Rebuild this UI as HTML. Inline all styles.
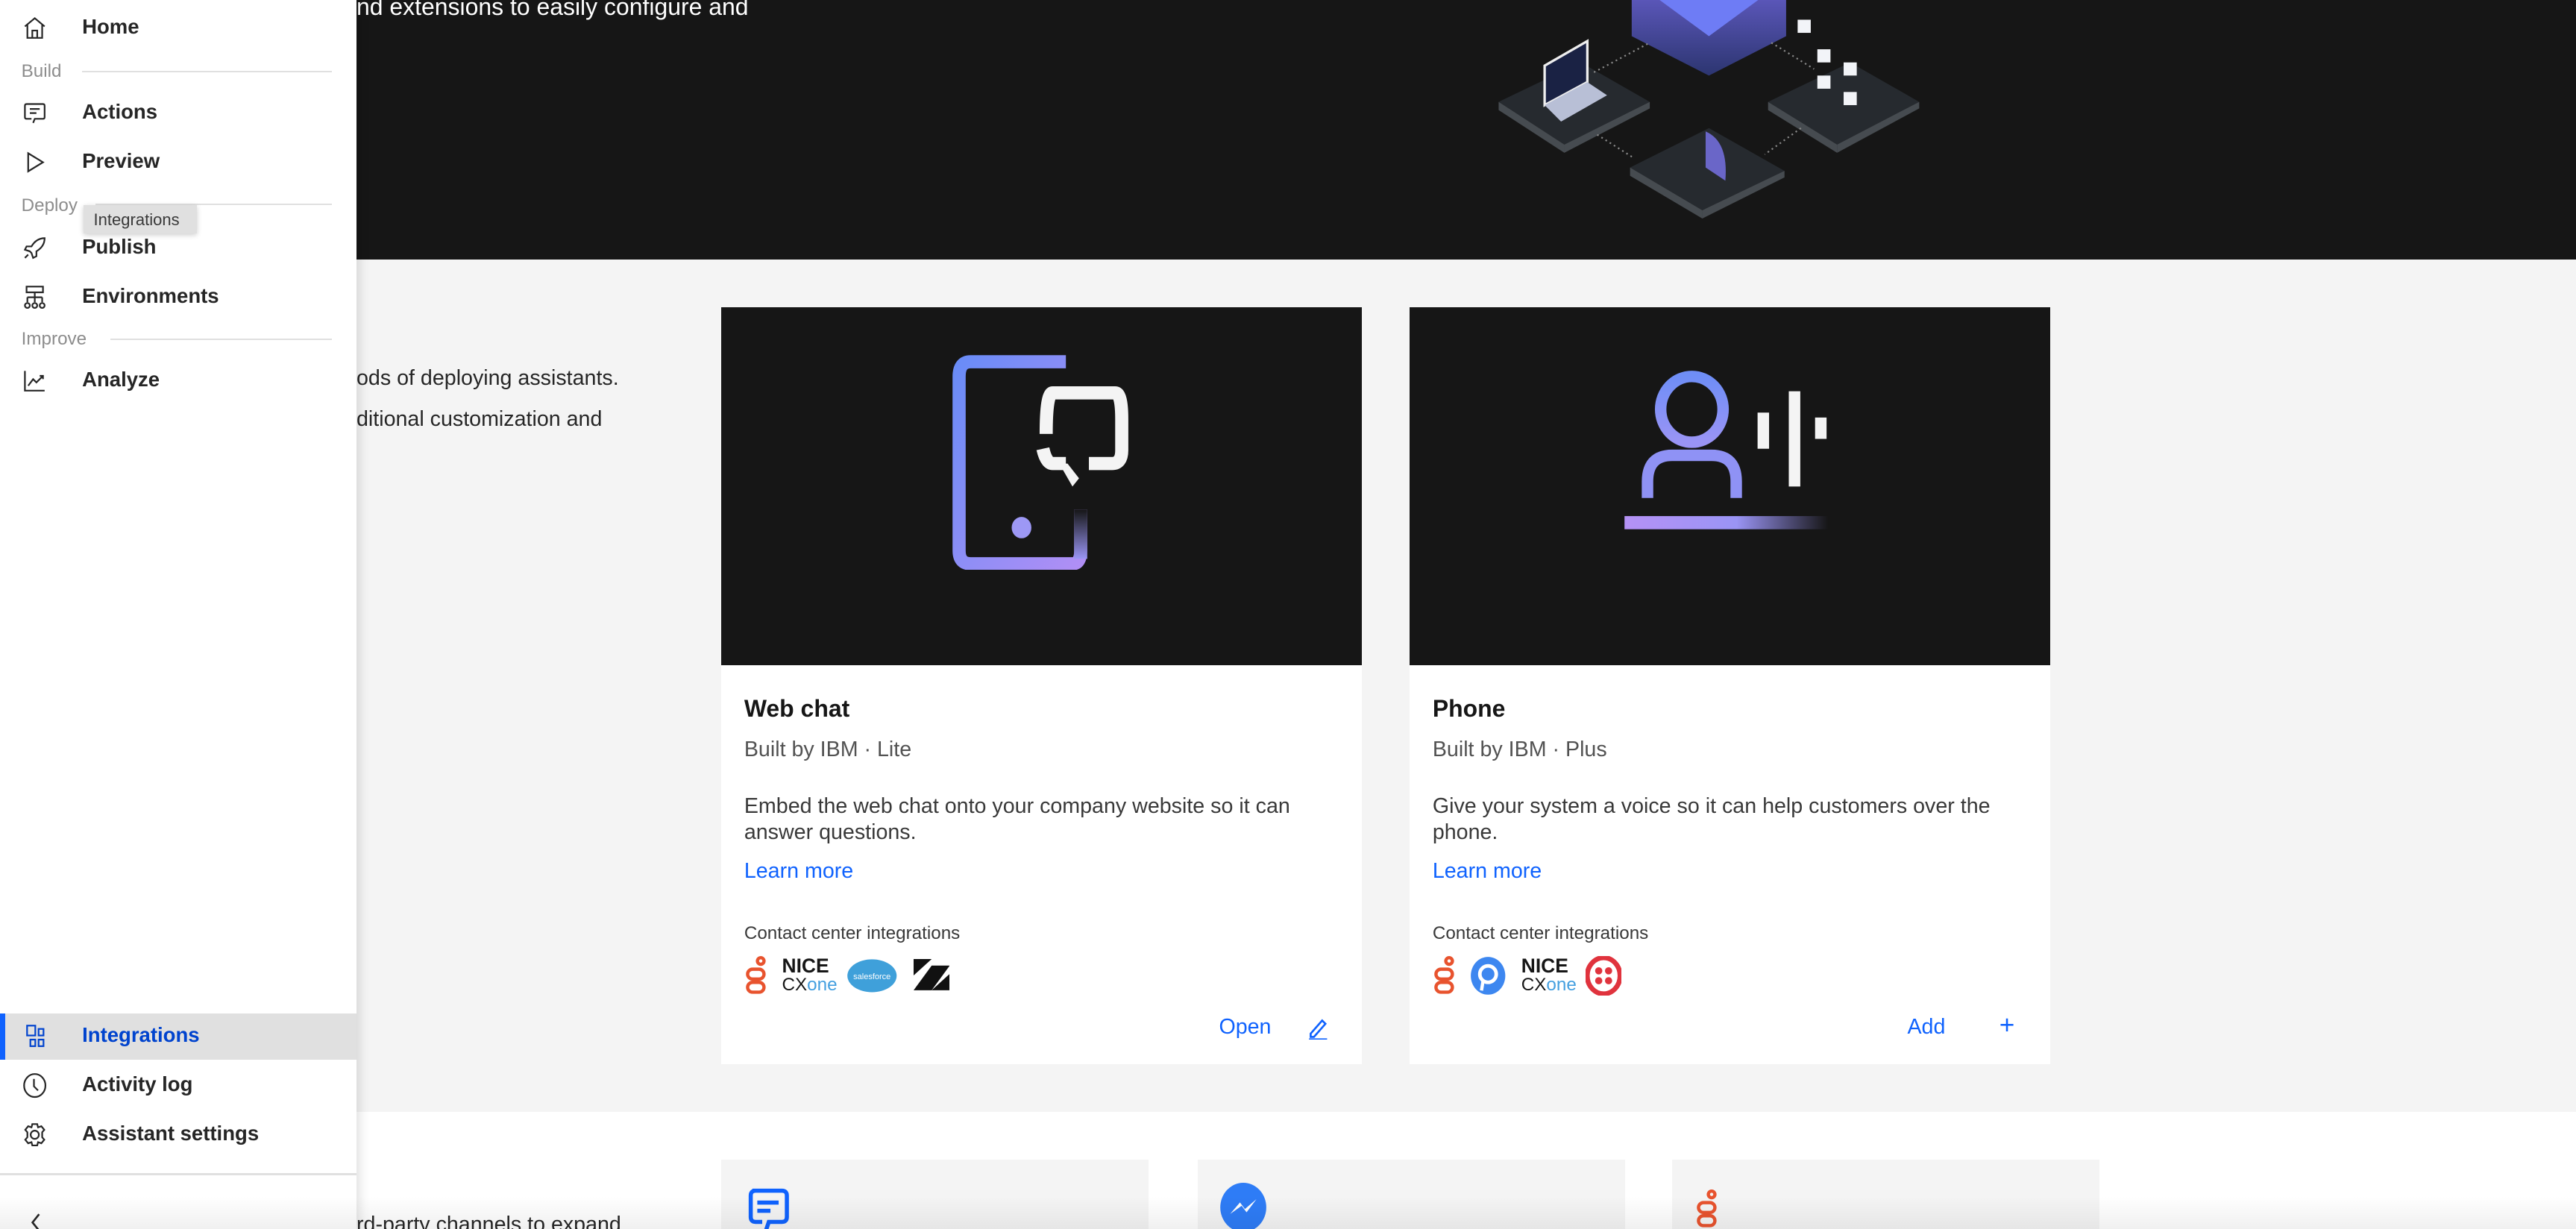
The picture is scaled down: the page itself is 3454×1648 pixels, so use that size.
<!DOCTYPE html>
<html><head><meta charset="utf-8">
<style>
*{margin:0;padding:0;box-sizing:border-box}
html,body{width:3454px;height:1648px;overflow:hidden;background:#fff}
#root{zoom:2.2028;width:1568px;height:748px;position:relative;overflow:hidden;font-family:"Liberation Sans",sans-serif;color:#161616}
.abs{position:absolute}
.hero{left:0;top:0;width:1568px;height:158px;background:#161616}
.gray{left:0;top:158px;width:1568px;height:519px;background:#f4f4f4}
.card{position:absolute;top:187px;width:390px;height:461px;background:#fff}
.card .img{height:218px;background:#161616;position:relative}
.card h3{position:absolute;left:14px;top:236px;font-size:14.5px;font-weight:bold}
.card .sub{position:absolute;left:14px;top:262px;font-size:13px;color:#525252}
.card .desc{position:absolute;left:14px;top:296px;width:350px;font-size:13px;line-height:16px;color:#393939}
.card .lm{position:absolute;left:14px;top:336px;font-size:13px;color:#0f62fe}
.card .cc{position:absolute;left:14px;top:375px;font-size:11px;color:#393939}
.card .logos{position:absolute;left:14px;top:394px;height:26px;display:flex;gap:9px;align-items:center}
.card .act{position:absolute;top:431px;font-size:13px;color:#0f62fe}
.side{left:0;top:0;width:217px;height:748px;background:#fff;box-shadow:2px 0 6px rgba(0,0,0,.12);z-index:5}
.it{position:absolute;left:0;width:217px;height:28px;font-size:12.5px;font-weight:bold;color:#262626}
.it span{position:absolute;left:50px;top:6px}
.it svg{position:absolute;left:13px;top:6px}
.lab{position:absolute;left:13px;font-size:11px;color:#8d8d8d}
.ln{position:absolute;height:1px;background:#e0e0e0;right:15px}
.sc{position:absolute;top:706px;width:260px;height:60px;background:#f4f4f4}
</style></head><body><div id="root">
<div class="abs hero"></div>
<div class="abs" style="left:217px;top:-4px;color:#fff;font-size:14.5px">nd extensions to easily configure and</div>
<svg class="abs" style="left:900px;top:0" width="290" height="150" viewBox="0 0 290 150">
<defs><linearGradient id="cb" x1="0" y1="0" x2="0" y2="1"><stop offset="0" stop-color="#5a56b8"/><stop offset="1" stop-color="#2c3570"/></linearGradient></defs>
<polygon points="93,0 187,0 187,22 140,46 93,22" fill="url(#cb)"/>
<polygon points="110,0 170,0 140,22" fill="#6e7cf5"/>
<g fill="#262a2f"><polygon points="12,62 62,38 104,62 52,88"/><polygon points="176,62 226,38 268,62 218,88"/><polygon points="92,102 140,78 186,104 136,128"/></g>
<g fill="#464b50"><polygon points="12,62 52,88 52,93 12,67"/><polygon points="52,88 104,62 104,66 52,93"/><polygon points="176,62 218,88 218,93 176,67"/><polygon points="218,88 268,62 268,66 218,93"/><polygon points="92,102 136,128 136,133 92,107"/><polygon points="136,128 186,104 186,108 136,133"/></g>
<polygon points="40,40 66,25 66,50 40,64" fill="#1a2244" stroke="#eee" stroke-width="1.5"/>
<polygon points="40,64 66,50 78,58 50,74" fill="#b8bfd6"/>
<path d="M138,80 q14,6 12,30 l-12,-8 z" fill="#6a66c8"/>
<g fill="#f2f4f8"><rect x="194" y="12" width="8" height="8"/><rect x="206" y="30" width="8" height="8"/><rect x="206" y="46" width="8" height="8"/><rect x="222" y="38" width="8" height="8"/><rect x="222" y="56" width="8" height="8"/></g>
<g stroke="#888" stroke-dasharray="1 2" stroke-width="1"><line x1="70" y1="44" x2="104" y2="26"/><line x1="178" y1="26" x2="204" y2="42"/><line x1="72" y1="82" x2="94" y2="96"/><line x1="196" y1="78" x2="174" y2="94"/></g>
</svg>
<div class="abs gray"></div>
<div class="abs" style="left:217px;top:218px;font-size:13px;color:#262626;line-height:25px">ods of deploying assistants.<br>ditional customization and</div>

<div class="card" style="left:439px">
<div class="img"><svg class="abs" style="left:140px;top:28px" width="112" height="132" viewBox="0 0 112 132">
<defs><linearGradient id="g1" x1="0" y1="0" x2="1" y2="1"><stop offset="0" stop-color="#6a8cf7"/><stop offset="1" stop-color="#b08ff5"/></linearGradient><linearGradient id="g2" x1="0" y1="0" x2="0" y2="1"><stop offset="0" stop-color="#161616"/><stop offset="1" stop-color="#9a95f5"/></linearGradient></defs>
<path d="M70,5 H12 Q5,5 5,14 V120 Q5,128 12,128 H74 Q79,128 79,120 V95" fill="none" stroke="url(#g1)" stroke-width="8"/>
<rect x="75" y="95" width="8" height="30" fill="url(#g2)"/>
<ellipse cx="43" cy="106" rx="6" ry="6.5" fill="#9d98f5"/>
<path d="M58,49 Q58,24 62,24 H100 Q104,24 104,40 V59 Q104,67 98,67 H84 M70,67 H62 Q58,67 56,58" fill="none" stroke="#f4f4f4" stroke-width="8"/>
<polygon points="66,67 71,67 78,76 74,81" fill="#f4f4f4"/>
</svg></div>
<h3>Web chat</h3><div class="sub">Built by IBM · Lite</div>
<div class="desc">Embed the web chat onto your company website so it can answer questions.</div>
<div class="lm">Learn more</div><div class="cc">Contact center integrations</div>
<div class="logos">
<svg width="14" height="24" viewBox="0 0 14 24"><g fill="none" stroke="#e8532e" stroke-width="2"><circle cx="10" cy="3" r="2"/><rect x="2" y="8" width="10" height="6" rx="3"/><rect x="2" y="16" width="10" height="6" rx="3"/></g></svg>
<div style="font-size:12px;font-weight:bold;line-height:11px;width:30px">NICE<br><span style="font-weight:normal;font-size:11px">CX<span style="color:#45a0e0">one</span></span></div>
<svg width="32" height="24" viewBox="0 0 32 24"><ellipse cx="16" cy="12" rx="15" ry="10" fill="#3fa0da"/><text x="16" y="14" font-size="5" fill="#fff" text-anchor="middle" font-family="Liberation Sans">salesforce</text></svg>
<svg width="22" height="20" viewBox="0 0 22 20"><polygon points="0,0 11,0 0,10" fill="#111"/><polygon points="11,4 22,4 11,19 0,19" fill="#111"/><polygon points="22,9 22,19 11,19" fill="#111"/></svg>
</div>
<div class="act" style="left:303px">Open</div>
<svg class="abs" style="left:357px;top:432px" width="13" height="14" viewBox="0 0 13 14"><path d="M2,10 L9,2 L11,4 L4,12 L2,12 Z M1,13.5 H12" fill="none" stroke="#0f62fe" stroke-width="1.2"/></svg>
</div>

<div class="card" style="left:858px">
<div class="img"><svg class="abs" style="left:130px;top:38px" width="130" height="114" viewBox="0 0 130 114">
<defs><linearGradient id="g3" x1="0" y1="0" x2="0" y2="1"><stop offset="0" stop-color="#6f8ef6"/><stop offset="1" stop-color="#9a94f5"/></linearGradient><linearGradient id="g4" x1="0" y1="0" x2="1" y2="0"><stop offset="0" stop-color="#b592f5"/><stop offset=".55" stop-color="#9a94f5"/><stop offset="1" stop-color="#161616"/></linearGradient></defs>
<ellipse cx="42" cy="24" rx="19" ry="20" fill="none" stroke="url(#g3)" stroke-width="7"/>
<path d="M15,78 V68 Q15,52 30,52 H54 Q69,52 69,68 V78" fill="none" stroke="#8f92f5" stroke-width="7"/>
<rect x="1" y="89" width="124" height="8" fill="url(#g4)"/>
<rect x="82" y="26" width="7" height="22" fill="#f4f4f4"/><rect x="101" y="13" width="7" height="58" fill="#f4f4f4"/><rect x="117" y="29" width="7" height="13" fill="#f4f4f4"/>
</svg></div>
<h3>Phone</h3><div class="sub">Built by IBM · Plus</div>
<div class="desc">Give your system a voice so it can help customers over the phone.</div>
<div class="lm">Learn more</div><div class="cc">Contact center integrations</div>
<div class="logos">
<svg width="14" height="24" viewBox="0 0 14 24"><g fill="none" stroke="#e8532e" stroke-width="2"><circle cx="10" cy="3" r="2"/><rect x="2" y="8" width="10" height="6" rx="3"/><rect x="2" y="16" width="10" height="6" rx="3"/></g></svg>
<svg width="22" height="24" viewBox="0 0 22 24"><ellipse cx="11" cy="12" rx="10.5" ry="11.5" fill="#3d87f0"/><circle cx="11" cy="11" r="5" fill="none" stroke="#fff" stroke-width="2.2"/><path d="M8,15 L7,21" stroke="#fff" stroke-width="2"/></svg>
<div style="font-size:12px;font-weight:bold;line-height:11px;width:30px">NICE<br><span style="font-weight:normal;font-size:11px">CX<span style="color:#45a0e0">one</span></span></div>
<svg width="22" height="24" viewBox="0 0 22 24"><ellipse cx="11" cy="12" rx="10" ry="11" fill="none" stroke="#e0333d" stroke-width="3"/><g fill="#e0333d"><circle cx="8" cy="9" r="2.2"/><circle cx="14" cy="9" r="2.2"/><circle cx="8" cy="15" r="2.2"/><circle cx="14" cy="15" r="2.2"/></g></svg>
</div>
<div class="act" style="left:303px">Add</div>
<div class="act" style="left:359px;top:428px;font-size:16px">+</div>
</div>

<div class="abs" style="left:217px;top:738px;font-size:13px;color:#262626">rd-party channels to expand</div>
<div class="sc" style="left:439px"><svg class="abs" style="left:15px;top:16px" width="28" height="30" viewBox="0 0 28 30"><path d="M4,3 H22 Q25,3 25,6 V19 Q25,22 22,22 H14 L12,28 M10,22 H6 Q3,22 3,19 V6 Q3,3 6,3" fill="none" stroke="#0f62fe" stroke-width="2.5"/><rect x="7" y="9" width="13" height="2.5" fill="#0f62fe"/><rect x="7" y="14" width="8" height="2.5" fill="#0f62fe"/></svg></div>
<div class="sc" style="left:729px"><svg class="abs" style="left:13px;top:14px" width="30" height="34" viewBox="0 0 30 34"><ellipse cx="15" cy="15" rx="14" ry="15" fill="#2e7cf6"/><path d="M7,19 L13,12 L16,16 L23,10 L17,18 L14,14 Z" fill="#fff"/></svg></div>
<div class="sc" style="left:1018px"><svg class="abs" style="left:14px;top:18px" width="14" height="24" viewBox="0 0 14 24"><g fill="none" stroke="#e8532e" stroke-width="2"><circle cx="10" cy="3" r="2"/><rect x="2" y="8" width="10" height="6" rx="3"/><rect x="2" y="16" width="10" height="6" rx="3"/></g></svg></div>
<div class="abs" style="left:0;top:728px;width:1568px;height:20px;background:linear-gradient(rgba(0,0,0,0),rgba(0,0,0,.06));z-index:6"></div>

<div class="abs side">
<div class="it" style="top:3px"><svg width="16" height="16" viewBox="0 0 16 16"><path d="M2,7 L8,2 L14,7 M3.5,6 V14 H12.5 V6 M6.5,14 V9.5 H9.5 V14" fill="none" stroke="#262626" stroke-width="1"/></svg><span>Home</span></div>
<div class="lab" style="top:37px">Build</div><div class="ln" style="left:50px;top:43px"></div>
<div class="it" style="top:55px"><svg width="16" height="16" viewBox="0 0 16 16"><path d="M3,2.5 H13 Q14,2.5 14,3.5 V10.5 Q14,11.5 13,11.5 H8 L7,14 M6,11.5 H3 Q2,11.5 2,10.5 V3.5 Q2,2.5 3,2.5 M5,5.5 H11 M5,8 H9" fill="none" stroke="#262626" stroke-width="1"/></svg><span>Actions</span></div>
<div class="it" style="top:85px"><svg width="16" height="16" viewBox="0 0 16 16"><path d="M4,2.5 V13.5 L13,8 Z" fill="none" stroke="#262626" stroke-width="1"/></svg><span>Preview</span></div>
<div class="lab" style="top:119px">Deploy</div><div class="ln" style="left:58px;top:124px"></div>
<div class="abs" style="left:51px;top:125px;width:69px;height:17px;background:#e0e0e0;font-size:10px;color:#393939;padding:3px 6px;box-shadow:0 1px 3px rgba(0,0,0,.2);z-index:2">Integrations</div>
<div class="it" style="top:137px"><svg width="16" height="16" viewBox="0 0 16 16"><path d="M14,2 Q9,2 6,7 L3,7 L2,9 L5,10 L6,11 L7,14 L9,13 L9,10 Q14,7 14,2 Z M4,12 L2,14" fill="none" stroke="#262626" stroke-width="1"/></svg><span>Publish</span></div>
<div class="it" style="top:167px"><svg width="16" height="16" viewBox="0 0 16 16"><path d="M3,1.5 H13 V5 H3 Z M8,5 V8 M3.5,8 H12.5 M3.5,8 V11 M8,8 V11 M12.5,8 V11" fill="none" stroke="#262626" stroke-width="1"/><g fill="none" stroke="#262626"><circle cx="3.5" cy="13" r="1.5"/><circle cx="8" cy="13" r="1.5"/><circle cx="12.5" cy="13" r="1.5"/></g></svg><span>Environments</span></div>
<div class="lab" style="top:200px">Improve</div><div class="ln" style="left:67px;top:206px"></div>
<div class="it" style="top:218px"><svg width="16" height="16" viewBox="0 0 16 16"><path d="M2,2 V14 H14 M4,11 L7,7 L9,9 L13,5 M11,5 H13 V7" fill="none" stroke="#262626" stroke-width="1"/></svg><span>Analyze</span></div>
<div class="it" style="top:617px;background:#e0e0e0;color:#0043ce"><div class="abs" style="left:0;top:0;width:3px;height:28px;background:#0f62fe"></div><svg width="16" height="16" viewBox="0 0 16 16" style="left:15px"><g fill="none" stroke="#0043ce" stroke-width="1"><rect x="1.5" y="1.5" width="5" height="6"/><rect x="8.5" y="3.5" width="3" height="4"/><rect x="3.5" y="10" width="3" height="4"/><rect x="8.5" y="10" width="3" height="4"/></g></svg><span>Integrations</span></div>
<div class="it" style="top:647px"><svg width="16" height="16" viewBox="0 0 16 16"><ellipse cx="8" cy="8" rx="6.5" ry="7" fill="none" stroke="#262626"/><path d="M7.5,4 V8.5 L10,11" fill="none" stroke="#262626"/></svg><span>Activity log</span></div>
<div class="it" style="top:677px"><svg width="16" height="16" viewBox="0 0 16 16"><path d="M6.5,1.5 H9.5 L10,3.5 L12,2.8 L13.8,5 L12.5,6.5 L12.5,9.5 L13.8,11 L12,13.2 L10,12.5 L9.5,14.5 H6.5 L6,12.5 L4,13.2 L2.2,11 L3.5,9.5 L3.5,6.5 L2.2,5 L4,2.8 L6,3.5 Z" fill="none" stroke="#262626"/><circle cx="8" cy="8" r="2.5" fill="none" stroke="#262626"/></svg><span>Assistant settings</span></div>
<div class="abs" style="left:0;top:714px;width:217px;height:1.5px;background:#e0e0e0"></div>
<svg class="abs" style="left:17px;top:738px" width="10" height="12" viewBox="0 0 10 12"><path d="M7,1 L3,6 L7,11" fill="none" stroke="#262626" stroke-width="1.2"/></svg>
</div>
</div></body></html>
